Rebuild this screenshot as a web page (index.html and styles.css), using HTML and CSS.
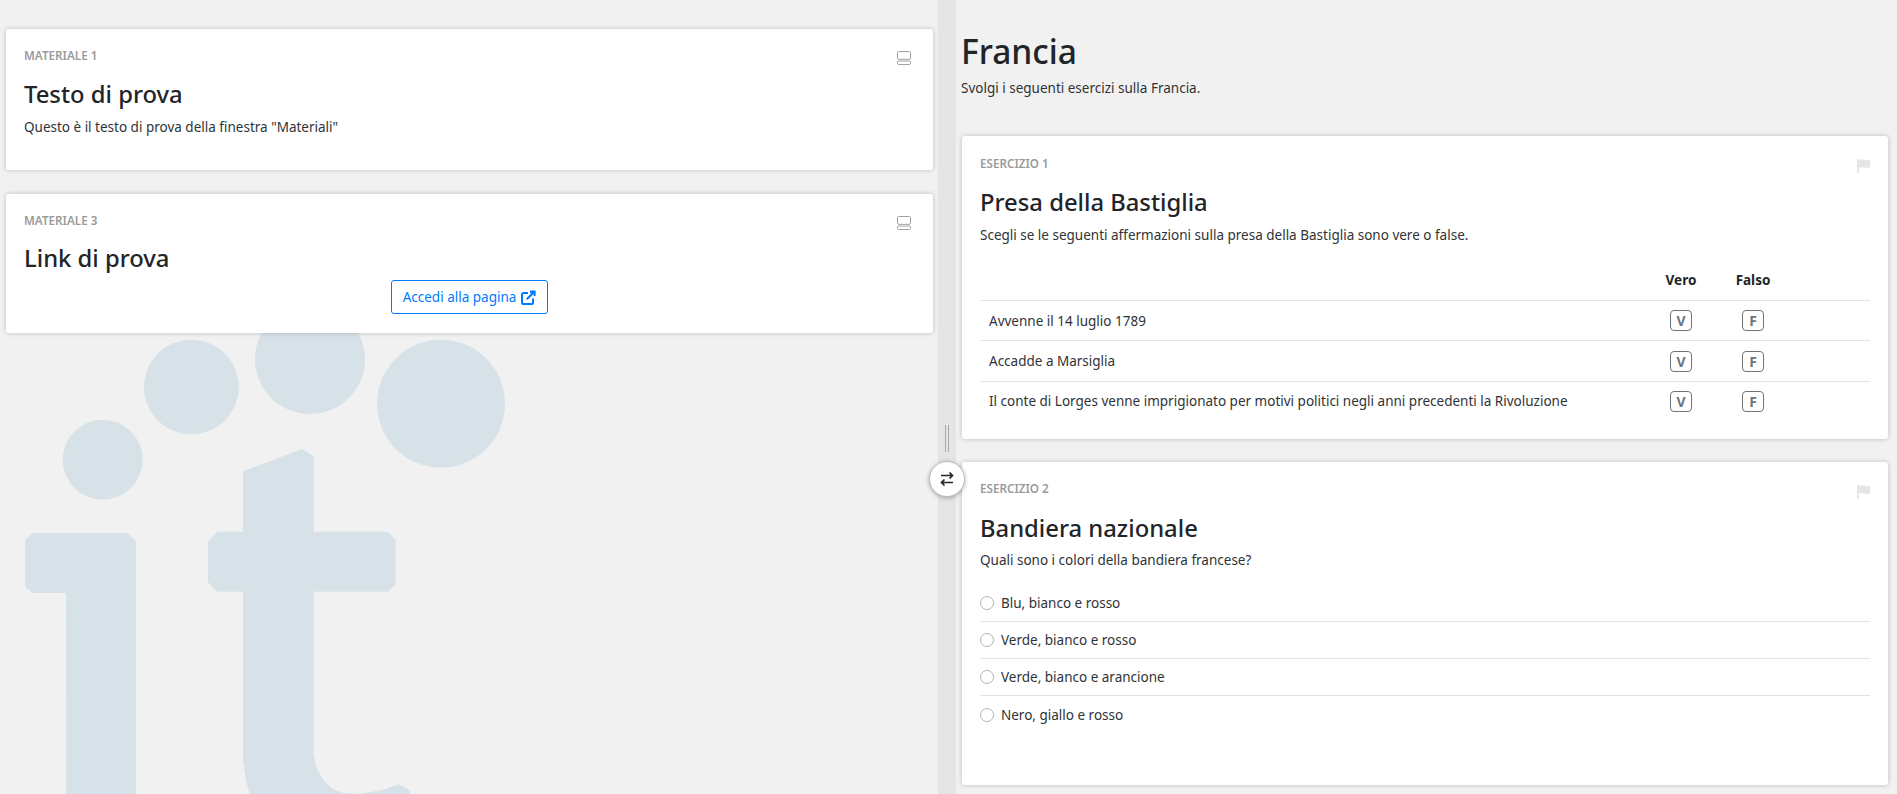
FILE: index.html
```html
<!DOCTYPE html>
<html lang="it">
<head>
<meta charset="utf-8">
<title>Francia</title>
<link rel="stylesheet" href="styles.css">
</head>
<body>
<div class="app">
  <section class="materials">
    <svg class="watermark" viewBox="0 0 1560 1392" aria-hidden="true">
      <circle cx="308" cy="389" r="120"/>
      <circle cx="574" cy="171" r="142"/>
      <circle cx="930" cy="87" r="165"/>
      <circle cx="1323" cy="221" r="192"/>
      <path d="M97 609H383L408 634V1392H199L198 789H97L75 769V630Z"/>
      <path d="M729 424L906 357L941 379V605H1163L1187 629V762L1163 785H941V1275L950 1315L968 1348L995 1375L1030 1389L1075 1392L1148 1380L1195 1363L1230 1381V1392H750L738 1355L729 1290V785H652L624 757V635L652 605H729Z"/>
    </svg>
    <article class="card material-one">
      <svg class="split-icon" viewBox="0 0 14 14" aria-hidden="true"><rect x=".5" y=".5" width="13" height="7.8" rx="1.2"/><rect x=".5" y="10" width="13" height="3.5" rx="1.2"/></svg>
      <div class="label">MATERIALE 1</div>
      <h2>Testo di prova</h2>
      <p>Questo è il testo di prova della finestra "Materiali"</p>
    </article>
    <article class="card material-two">
      <svg class="split-icon" viewBox="0 0 14 14" aria-hidden="true"><rect x=".5" y=".5" width="13" height="7.8" rx="1.2"/><rect x=".5" y="10" width="13" height="3.5" rx="1.2"/></svg>
      <div class="label">MATERIALE 3</div>
      <h2>Link di prova</h2>
      <div class="link-row">
        <a class="link-btn" href="#">Accedi alla pagina
          <svg viewBox="0 0 15 15" aria-hidden="true"><path class="ext" d="M7 3H2.6A1.6 1.6 0 0 0 1 4.6V12.4A1.6 1.6 0 0 0 2.6 14H10.4A1.6 1.6 0 0 0 12 12.4V8.5"/><path class="ext" d="M5.8 9.2L13 2"/><path class="ext-head" d="M9 0.4H14.6V6L12.6 6V3.4L10 3.4L9 2.4Z"/></svg>
        </a>
      </div>
    </article>
  </section>

  <div class="divider">
    <span class="grip"></span>
    <button class="swap" type="button" aria-label="Scambia">
      <svg viewBox="0 0 16 16" aria-hidden="true"><path d="M2 4.5H13.5M10.5 1.5L13.5 4.5L10.5 7.5"/><path d="M14 11.5H2.5M5.5 8.5L2.5 11.5L5.5 14.5"/></svg>
    </button>
  </div>

  <main class="exercises">
    <h1>Francia</h1>
    <p class="intro">Svolgi i seguenti esercizi sulla Francia.</p>

    <article class="card exercise-one">
      <svg class="flag" viewBox="0 0 14 15" aria-hidden="true"><path d="M0 0H2V15H0ZM2 1C5.5 -.4 8.5 2.4 14 .8V9C8.5 10.6 5.5 7.8 2 9.2Z"/></svg>
      <div class="label">ESERCIZIO 1</div>
      <h2>Presa della Bastiglia</h2>
      <p>Scegli se le seguenti affermazioni sulla presa della Bastiglia sono vere o false.</p>
      <div class="tf">
        <div class="tf-row tf-head"><span></span><b>Vero</b><b>Falso</b><span></span></div>
        <div class="tf-row"><span class="stmt">Avvenne il 14 luglio 1789</span><span class="key">V</span><span class="key">F</span><span></span></div>
        <div class="tf-row"><span class="stmt">Accadde a Marsiglia</span><span class="key">V</span><span class="key">F</span><span></span></div>
        <div class="tf-row"><span class="stmt">Il conte di Lorges venne imprigionato per motivi politici negli anni precedenti la Rivoluzione</span><span class="key">V</span><span class="key">F</span><span></span></div>
      </div>
    </article>

    <article class="card exercise-two">
      <svg class="flag" viewBox="0 0 14 15" aria-hidden="true"><path d="M0 0H2V15H0ZM2 1C5.5 -.4 8.5 2.4 14 .8V9C8.5 10.6 5.5 7.8 2 9.2Z"/></svg>
      <div class="label">ESERCIZIO 2</div>
      <h2>Bandiera nazionale</h2>
      <p>Quali sono i colori della bandiera francese?</p>
      <ul class="options">
        <li><i class="radio"></i>Blu, bianco e rosso</li>
        <li><i class="radio"></i>Verde, bianco e rosso</li>
        <li><i class="radio"></i>Verde, bianco e arancione</li>
        <li><i class="radio"></i>Nero, giallo e rosso</li>
      </ul>
    </article>
  </main>
</div>
</body>
</html>
```

FILE: styles.css
```css
* { box-sizing: border-box; }
html, body { margin: 0; height: 100%; overflow: hidden; }
body {
  background: #f1f1f1;
  color: #2f3337;
  font-family: "Noto Sans", "Open Sans", sans-serif;
  font-size: 13.5px;
  line-height: 20px;
}
.app { display: flex; height: 794px; }

.materials {
  position: relative;
  width: 938px;
  flex: none;
  padding: 29px 5px 0 6px;
  overflow: hidden;
}
.watermark {
  position: absolute;
  left: 0;
  top: 330px;
  width: 520px;
  height: 464px;
  fill: #d7e2e8;
}
.divider {
  position: relative;
  width: 18px;
  flex: none;
  background: #e5e5e5;
}
.grip {
  position: absolute;
  left: 7px;
  top: 425px;
  width: 4px;
  height: 27px;
  border-left: 1px solid #a8a8a8;
  border-right: 1px solid #a8a8a8;
}
.swap {
  position: absolute;
  left: -9px;
  top: 461px;
  width: 36px;
  height: 36px;
  padding: 0;
  display: flex;
  align-items: center;
  justify-content: center;
  background: #fff;
  border: 1px solid #bdbdbd;
  border-radius: 50%;
  box-shadow: 0 1px 4px rgba(0,0,0,.3);
  z-index: 2;
}
.swap svg { width: 16px; height: 16px; fill: none; stroke: #212529; stroke-width: 1.7; }

.exercises {
  flex: 1;
  min-width: 0;
  padding: 0 9px 0 5px;
}
h1 {
  margin: 0;
  padding-top: 29px;
  font-size: 33.5px;
  font-weight: 500;
  line-height: 44px;
  color: #212529;
}
.intro { margin: 5px 0 0; }

.card {
  position: relative;
  background: #fff;
  border-radius: 3px;
  box-shadow: 0 0 5px rgba(0,0,0,.22);
  padding: 18px;
}
.material-one { height: 141px; margin-bottom: 24px; padding-top: 17px; }
.material-two { height: 139px; padding-top: 17px; }
.exercise-one { margin: 38px 0 0 1px; height: 303px; }
.exercise-two { margin: 23px 0 0 1px; height: 323px; padding-top: 17px; }

.label { font-size: 11.7px; font-weight: 600; line-height: 18px; color: #9a9a9a; }
.card h2 { margin: 16px 0 0; font-size: 23.8px; font-weight: 500; line-height: 29px; color: #212529; }
.card p { margin: 8px 0 0; }
.material-two h2 { margin-top: 15px; }
.exercise-two h2 { margin-top: 17px; }
.exercise-two p { margin-top: 7px; }

.split-icon {
  position: absolute;
  top: 22px;
  right: 22px;
  width: 14px;
  height: 14px;
  fill: none;
  stroke: #a0a0a0;
}
.flag {
  position: absolute;
  top: 23px;
  right: 18px;
  width: 13px;
  height: 14px;
  fill: #e5e5e5;
}

.link-row { display: flex; justify-content: center; margin-top: 7px; }
.link-btn {
  display: flex;
  align-items: center;
  gap: 5px;
  height: 34px;
  padding: 0 10.5px;
  color: #007bff;
  border: 1px solid #007bff;
  border-radius: 3px;
  text-decoration: none;
}
.link-btn svg { width: 15px; height: 15px; }
.ext { fill: none; stroke: #007bff; stroke-width: 2; }
.ext-head { fill: #007bff; }

.tf { margin-top: 17px; }
.tf-row {
  display: grid;
  grid-template-columns: 1fr 72px 72px 81px;
  align-items: center;
  height: 40.4px;
  border-top: 1px solid #e3e3e3;
  justify-items: center;
}
.tf-head { height: 38px; padding-bottom: 2px; border-top: 0; color: #212529; }
.tf-head b { font-weight: 700; }
.stmt { justify-self: start; padding-left: 9px; }
.key {
  width: 22px;
  height: 21px;
  border: 1px solid #6c757d;
  border-radius: 4px;
  color: #6c757d;
  font-weight: 700;
  font-size: 14px;
  line-height: 19px;
  text-align: center;
}

.options { list-style: none; margin: 15px 0 0; padding: 0; }
.options li {
  display: flex;
  align-items: center;
  gap: 7px;
  height: 37px;
  border-bottom: 1px solid #e3e3e3;
}
.options li:last-child { border-bottom: 0; }
.radio {
  width: 14px;
  height: 14px;
  border: 1px solid #adb5bd;
  border-radius: 50%;
  background: #fff;
}
```
